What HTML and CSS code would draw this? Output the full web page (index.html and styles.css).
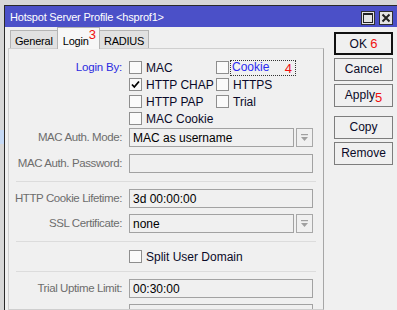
FILE: index.html
```html
<!DOCTYPE html>
<html lang="en">
<head>
    <meta charset="UTF-8">
    <title>Hotspot Server Profile</title>
    <link rel="stylesheet" href="styles.css">
</head>
<body>
    <div class="desk">
        <div class="behind">
            <div class="behind-sel"></div>
        </div>
        <div class="window">
            <div class="titlebar">
                <span class="title">Hotspot Server Profile &lt;hsprof1&gt;</span>
                <div class="tb-btns">
                    <span class="tb-btn">
                        <svg width="12" height="12" viewBox="0 0 12 12"><rect x="1.5" y="1.5" width="9" height="9" fill="none" stroke="#222" stroke-width="1"/><rect x="1" y="1" width="10" height="2" fill="#222"/></svg>
                    </span>
                    <span class="tb-btn">
                        <svg width="12" height="12" viewBox="0 0 12 12"><path d="M2.5 2.5 L9.5 9.5 M9.5 2.5 L2.5 9.5" stroke="#222" stroke-width="2"/></svg>
                    </span>
                </div>
            </div>
            <div class="win-body">
                <div class="main">
                    <div class="tabs">
                        <div class="tab">General</div>
                        <div class="tab active">Login<span class="mark">3</span></div>
                        <div class="tab">RADIUS</div>
                    </div>
                    <div class="panel">
                        <div class="row login-row">
                            <div class="label blue">Login By:</div>
                            <div class="cb-grid">
                                <div class="cb-row"><span class="cb"></span>MAC</div>
                                <div class="cb-row"><span class="cb"></span><span class="focus">Cookie<span class="mark">4</span></span></div>
                                <div class="cb-row"><span class="cb"><svg width="11" height="11" viewBox="0 0 11 11"><path d="M2 5.5 L4.3 8 L9 2.5" fill="none" stroke="#000" stroke-width="1.8"/></svg></span>HTTP CHAP</div>
                                <div class="cb-row"><span class="cb"></span>HTTPS</div>
                                <div class="cb-row"><span class="cb"></span>HTTP PAP</div>
                                <div class="cb-row"><span class="cb"></span>Trial</div>
                                <div class="cb-row"><span class="cb"></span>MAC Cookie</div>
                            </div>
                        </div>
                        <div class="row r-mode">
                            <div class="label">MAC Auth. Mode:</div>
                            <div class="combo">
                                <div class="field">MAC as username</div>
                                <span class="drop"><svg width="9" height="9" viewBox="0 0 9 9"><rect x="1" y="1" width="7" height="1.2" fill="#a0a0a0"/><path d="M1 4 H8 L4.5 8 Z" fill="#a0a0a0"/></svg></span>
                            </div>
                        </div>
                        <div class="row r-pass">
                            <div class="label">MAC Auth. Password:</div>
                            <div class="field"></div>
                        </div>
                        <div class="sep s1"></div>
                        <div class="row r-life">
                            <div class="label">HTTP Cookie Lifetime:</div>
                            <div class="field">3d 00:00:00</div>
                        </div>
                        <div class="row r-ssl">
                            <div class="label">SSL Certificate:</div>
                            <div class="combo">
                                <div class="field">none</div>
                                <span class="drop"><svg width="9" height="9" viewBox="0 0 9 9"><rect x="1" y="1" width="7" height="1.2" fill="#a0a0a0"/><path d="M1 4 H8 L4.5 8 Z" fill="#a0a0a0"/></svg></span>
                            </div>
                        </div>
                        <div class="sep s2"></div>
                        <div class="row r-split">
                            <div class="label"></div>
                            <div class="cb-row"><span class="cb"></span>Split User Domain</div>
                        </div>
                        <div class="sep s3"></div>
                        <div class="row r-trial">
                            <div class="label">Trial Uptime Limit:</div>
                            <div class="field">00:30:00</div>
                        </div>
                        <div class="row r-next">
                            <div class="label"></div>
                            <div class="field"></div>
                        </div>
                    </div>
                </div>
                <div class="side">
                    <div class="btn default">OK <span class="mark-in">6</span></div>
                    <div class="btn">Cancel</div>
                    <div class="btn">Apply<span class="mark-low">5</span></div>
                    <div class="btn gap">Copy</div>
                    <div class="btn">Remove</div>
                </div>
            </div>
        </div>
    </div>
</body>
</html>
```

FILE: styles.css
```css
body {
    margin: 0;
    background-color: #d7d7d7;
    font-family: 'Liberation Sans', Arial, sans-serif;
    font-size: 11px;
    color: #000;
    overflow: hidden;
    height: 310px;
}
.desk {
    display: flex;
    padding-top: 5px;
    height: 305px;
}
.behind {
    width: 4px;
    flex: none;
}
.behind-sel {
    margin-top: 125px;
    height: 14px;
    background-color: #c5d9f5;
}
.window {
    flex: 1;
    display: flex;
    flex-direction: column;
    border-top: 1px solid #2a2a2a;
    border-left: 1px solid #2a2a2a;
    background-color: #f0f0f0;
    overflow: hidden;
}
.titlebar {
    flex: none;
    height: 21px;
    background-color: #4b50c8;
    display: flex;
    align-items: center;
    justify-content: space-between;
    padding: 0 4px 0 5px;
}
.title {
    color: #fff;
    font-size: 11px;
    letter-spacing: -0.2px;
    margin-top: 1px;
}
.tb-btns {
    display: flex;
    gap: 4px;
    margin-top: 2px;
}
.tb-btn {
    width: 12px;
    height: 12px;
    border: 1px solid #303030;
    background-color: #e4e4e4;
    display: flex;
}
.win-body {
    flex: 1;
    display: flex;
    min-height: 0;
}
.main {
    width: 316px;
    padding-left: 3px;
    display: flex;
    flex-direction: column;
}
.tabs {
    flex: none;
    display: flex;
    align-items: flex-end;
    height: 22px;
    margin-left: 2px;
}
.tab {
    height: 18px;
    line-height: 20px;
    padding: 0 4px;
    font-size: 11px;
    letter-spacing: -0.2px;
    background-color: #e1e1e1;
    border: 1px solid #b4b4b4;
    border-bottom: none;
}
.tab.active {
    height: 21px;
    line-height: 25px;
    background-color: #f7f7f7;
    padding: 0 3px 0 5px;
    margin: 0 -1px;
    position: relative;
    z-index: 1;
}
.mark {
    color: #f01010;
    font-size: 13px;
    vertical-align: 6px;
    line-height: 1;
    letter-spacing: 0;
}
.panel {
    flex: 1;
    border: 1px solid #cfcfcf;
    border-right-color: #a6a6a6;
    padding-top: 10px;
    margin-top: -1px;
    overflow: hidden;
}
.row {
    display: grid;
    grid-template-columns: 113px 184px;
    column-gap: 7px;
}
.label {
    text-align: right;
    color: #6d6d6d;
    line-height: 19px;
    font-size: 11.5px;
    letter-spacing: -0.4px;
}
.label.blue {
    color: #2b2be0;
    line-height: 17px;
    letter-spacing: -0.2px;
}
.cb-grid {
    display: grid;
    grid-template-columns: 87px 1fr;
}
.cb-row {
    height: 17px;
    display: flex;
    align-items: center;
    gap: 4px;
    font-size: 12px;
    color: #0a0a28;
}
.cb {
    flex: none;
    width: 11px;
    height: 11px;
    border: 1px solid #8e8e8e;
    background-color: #fafafa;
    display: flex;
    align-items: center;
    justify-content: center;
}
.focus {
    color: #2b2bf0;
    outline: 1px dotted #333;
    padding: 0 3px 0 1px;
    margin-left: -2px;
    width: 60px;
    line-height: 13px;
}
.focus .mark {
    float: right;
    vertical-align: 0;
    margin-top: 1px;
}
.field {
    height: 17px;
    line-height: 18px;
    border: 1px solid #a2a2a2;
    padding-left: 3px;
    font-size: 12px;
    color: #000;
}
.combo {
    display: flex;
    gap: 2px;
}
.combo .field {
    flex: 1;
}
.drop {
    width: 15px;
    height: 17px;
    border: 1px solid #a8a8a8;
    display: flex;
    align-items: center;
    justify-content: center;
}
.sep {
    flex: none;
    height: 1px;
    background-color: #dcdcdc;
    margin-left: 7px;
    margin-right: 7px;
}
.login-row .label {
    align-self: start;
}
.r-mode { margin-top: 1px; }
.r-pass { margin-top: 7px; }
.s1 { margin-top: 8px; }
.r-life { margin-top: 7px; }
.r-ssl { margin-top: 6px; }
.s2 { margin-top: 8px; }
.r-split { margin-top: 6px; }
.s3 { margin-top: 6px; }
.r-trial { margin-top: 7px; }
.r-next { margin-top: 6px; }
.side {
    padding: 5px 0 0 10px;
    display: flex;
    flex-direction: column;
    gap: 3px;
}
.btn {
    width: 57px;
    height: 21px;
    line-height: 21px;
    border: 1px solid #7d7d7d;
    text-align: center;
    font-size: 12px;
    color: #0a0a28;
}
.btn.default {
    border: 2px solid #111;
    width: 55px;
    height: 19px;
    line-height: 19px;
}
.btn.gap {
    margin-top: 6px;
}
.mark-in {
    color: #f01010;
    font-size: 13px;
}
.mark-low {
    color: #f01010;
    font-size: 13px;
    vertical-align: -3px;
}
```
